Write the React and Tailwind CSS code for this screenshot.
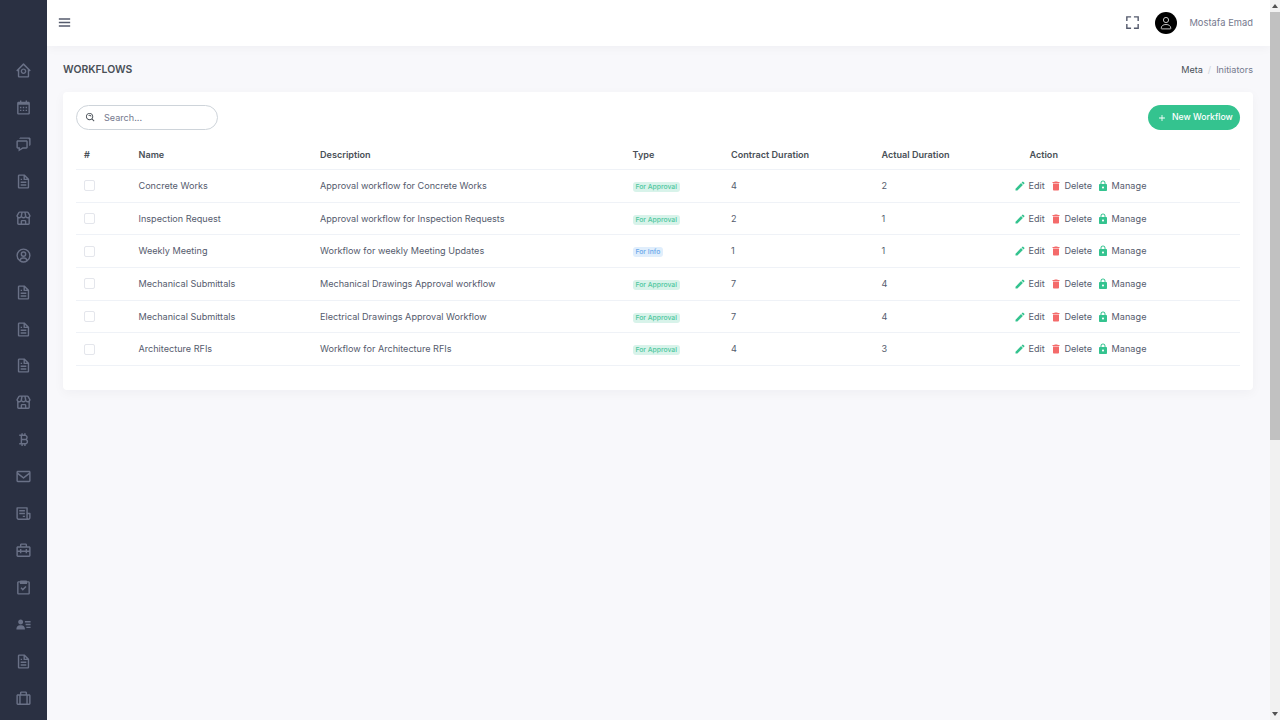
import React from 'react'
import {
  BiHomeCircle, BiCalendar, BiChat, BiFile, BiStore, BiUserCircle, BiBitcoin, BiEnvelope,
  BiReceipt, BiBriefcaseAlt2, BiTask, BiSolidUserDetail, BiBriefcaseAlt, BiMenu, BiFullscreen,
  BiSearchAlt, BiPlus,
} from 'react-icons/bi'
import { MdEdit, MdDelete, MdLock } from 'react-icons/md'

const navIcons = [
  BiHomeCircle, BiCalendar, BiChat, BiFile, BiStore, BiUserCircle, BiFile, BiFile, BiFile,
  BiStore, BiBitcoin, BiEnvelope, BiReceipt, BiBriefcaseAlt2, BiTask, BiSolidUserDetail, BiFile, BiBriefcaseAlt,
]

const workflows = [
  { name: 'Concrete Works', description: 'Approval workflow for Concrete Works', type: 'For Approval', contract: 4, actual: 2 },
  { name: 'Inspection Request', description: 'Approval workflow for Inspection Requests', type: 'For Approval', contract: 2, actual: 1 },
  { name: 'Weekly Meeting', description: 'Workflow for weekly Meeting Updates', type: 'For Info', contract: 1, actual: 1 },
  { name: 'Mechanical Submittals', description: 'Mechanical Drawings Approval workflow', type: 'For Approval', contract: 7, actual: 4 },
  { name: 'Mechanical Submittals', description: 'Electrical Drawings Approval Workflow', type: 'For Approval', contract: 7, actual: 4 },
  { name: 'Architecture RFIs', description: 'Workflow for Architecture RFIs', type: 'For Approval', contract: 4, actual: 3 },
]

const rowGrid = 'grid grid-cols-[54.5px_181.5px_312.5px_98.5px_150.5px_126px_1fr] items-center px-2'

function Sidebar() {
  return (
    <aside className="w-[47px] shrink-0 bg-[#2a3042] pt-[52px] overflow-hidden z-20">
      {navIcons.map((Icon, index) => (
        <div key={index} className="h-[36.95px] flex items-center justify-center">
          <Icon className="text-[#6a7187] text-[17px]" />
        </div>
      ))}
    </aside>
  )
}

function Header() {
  return (
    <header className="h-[46px] shrink-0 bg-white flex items-center pl-[9px] pr-[17px] shadow-[0_2px_10px_rgba(18,38,63,0.04)] z-10">
      <BiMenu className="text-[#555b6d] text-[17px] -mt-[1px]" />
      <div className="ml-auto flex items-center">
        <BiFullscreen className="text-[#555b6d] text-[17px] -mt-[2px]" />
        <div className="ml-[14px] w-[22px] h-[22px] rounded-full bg-black flex items-center justify-center">
          {/* thin outline avatar */}
          <svg width="16" height="16" viewBox="0 0 16 16" fill="none" stroke="#d9d9d9" strokeWidth="0.9">
            <circle cx="8" cy="5" r="2.6" />
            <path d="M3.2 13.4c0-2.6 2-3.9 4.8-3.9s4.8 1.3 4.8 3.9c0 .3-.2.5-.5.5H3.7c-.3 0-.5-.2-.5-.5z" />
          </svg>
        </div>
        <span className="ml-[12px] text-[#74788d] text-[9.3px] tracking-[0.05px]">Mostafa Emad</span>
      </div>
    </header>
  )
}

function TypeBadge({ type }) {
  const isInfo = type === 'For Info'
  return (
    <span className={`inline-block rounded-[3px] px-[3px] h-[10px] leading-[10px] text-[6.8px] font-medium ${isInfo ? 'bg-[#e0eefc] text-[#6ba8ea]' : 'bg-[#d8f3ea] text-[#4fc79f]'}`}>
      {type}
    </span>
  )
}

function WorkflowRow({ item }) {
  return (
    <div className={`${rowGrid} h-[32.7px] border-b border-[#eff2f7] text-[#555b6d] text-[9.1px]`}>
      <div>
        <div className="w-[11px] h-[11px] border border-[#e4e6ec] rounded-[2px] bg-white" />
      </div>
      <div>{item.name}</div>
      <div>{item.description}</div>
      <div><TypeBadge type={item.type} /></div>
      <div>{item.contract}</div>
      <div>{item.actual}</div>
      <div className="flex items-center pl-[6px]">
        <MdEdit className="text-[#34c38f] text-[12px]" />
        <span className="ml-[3px] w-[21px]">Edit</span>
        <MdDelete className="text-[#f46a6a] text-[12px]" />
        <span className="ml-[3px] w-[32px]">Delete</span>
        <MdLock className="text-[#34c38f] text-[12px]" />
        <span className="ml-[3px] tracking-[0.05px]">Manage</span>
      </div>
    </div>
  )
}

function WorkflowCard() {
  return (
    <section className="mt-[15px] bg-white rounded-[4px] h-[298px] px-[13px] pt-[13px] shadow-[0_3px_12px_rgba(18,38,63,0.04)]">
      <div className="flex items-center justify-between">
        <div className="w-[142px] h-[25px] rounded-full border border-[#ced4da] flex items-center pl-[8px]">
          <BiSearchAlt className="text-[#495057] text-[11px]" />
          <span className="ml-[8px] text-[#74788d] text-[9.1px]">Search...</span>
        </div>
        <button className="w-[92px] h-[25px] rounded-full bg-[#34c38f] text-white text-[8.7px] font-medium flex items-center pl-[9px]">
          <BiPlus className="text-[10px]" />
          <span className="ml-[5px]">New Workflow</span>
        </button>
      </div>
      <div className={`${rowGrid} mt-[12px] h-[28px] pb-[2px] border-b border-[#eff2f7] text-[#495057] text-[9.1px] font-semibold`}>
        <div>#</div>
        <div>Name</div>
        <div>Description</div>
        <div>Type</div>
        <div>Contract Duration</div>
        <div>Actual Duration</div>
        <div className="pl-[22px]">Action</div>
      </div>
      {workflows.map((item, index) => (
        <WorkflowRow key={index} item={item} />
      ))}
    </section>
  )
}

function Scrollbar() {
  return (
    <div className="w-[10px] shrink-0 bg-[#f1f1f1] flex flex-col z-20">
      <div className="h-[12px] flex items-center justify-center">
        <div className="w-0 h-0 border-x-[3px] border-x-transparent border-b-[4px] border-b-[#505050]" />
      </div>
      <div className="h-[428px] bg-[#c1c1c1]" />
      <div className="mt-auto h-[12px] flex items-center justify-center">
        <div className="w-0 h-0 border-x-[3px] border-x-transparent border-t-[4px] border-t-[#505050]" />
      </div>
    </div>
  )
}

export default function App() {
  return (
    <div className="flex h-screen overflow-hidden bg-[#f8f8fb] font-['Inter','Liberation_Sans',sans-serif]">
      <Sidebar />
      <main className="flex-1 min-w-0 flex flex-col">
        <Header />
        <div className="pl-[16px] pr-[17px] pt-[16px]">
          <div className="flex items-center justify-between h-[15px]">
            <h1 className="text-[#495057] text-[10.4px] font-semibold">WORKFLOWS</h1>
            <div className="text-[9.1px] flex items-center">
              <span className="text-[#495057]">Meta</span>
              <span className="text-[#ced4da] mx-[5px]">/</span>
              <span className="text-[#74788d]">Initiators</span>
            </div>
          </div>
          <WorkflowCard />
        </div>
      </main>
      <Scrollbar />
    </div>
  )
}
